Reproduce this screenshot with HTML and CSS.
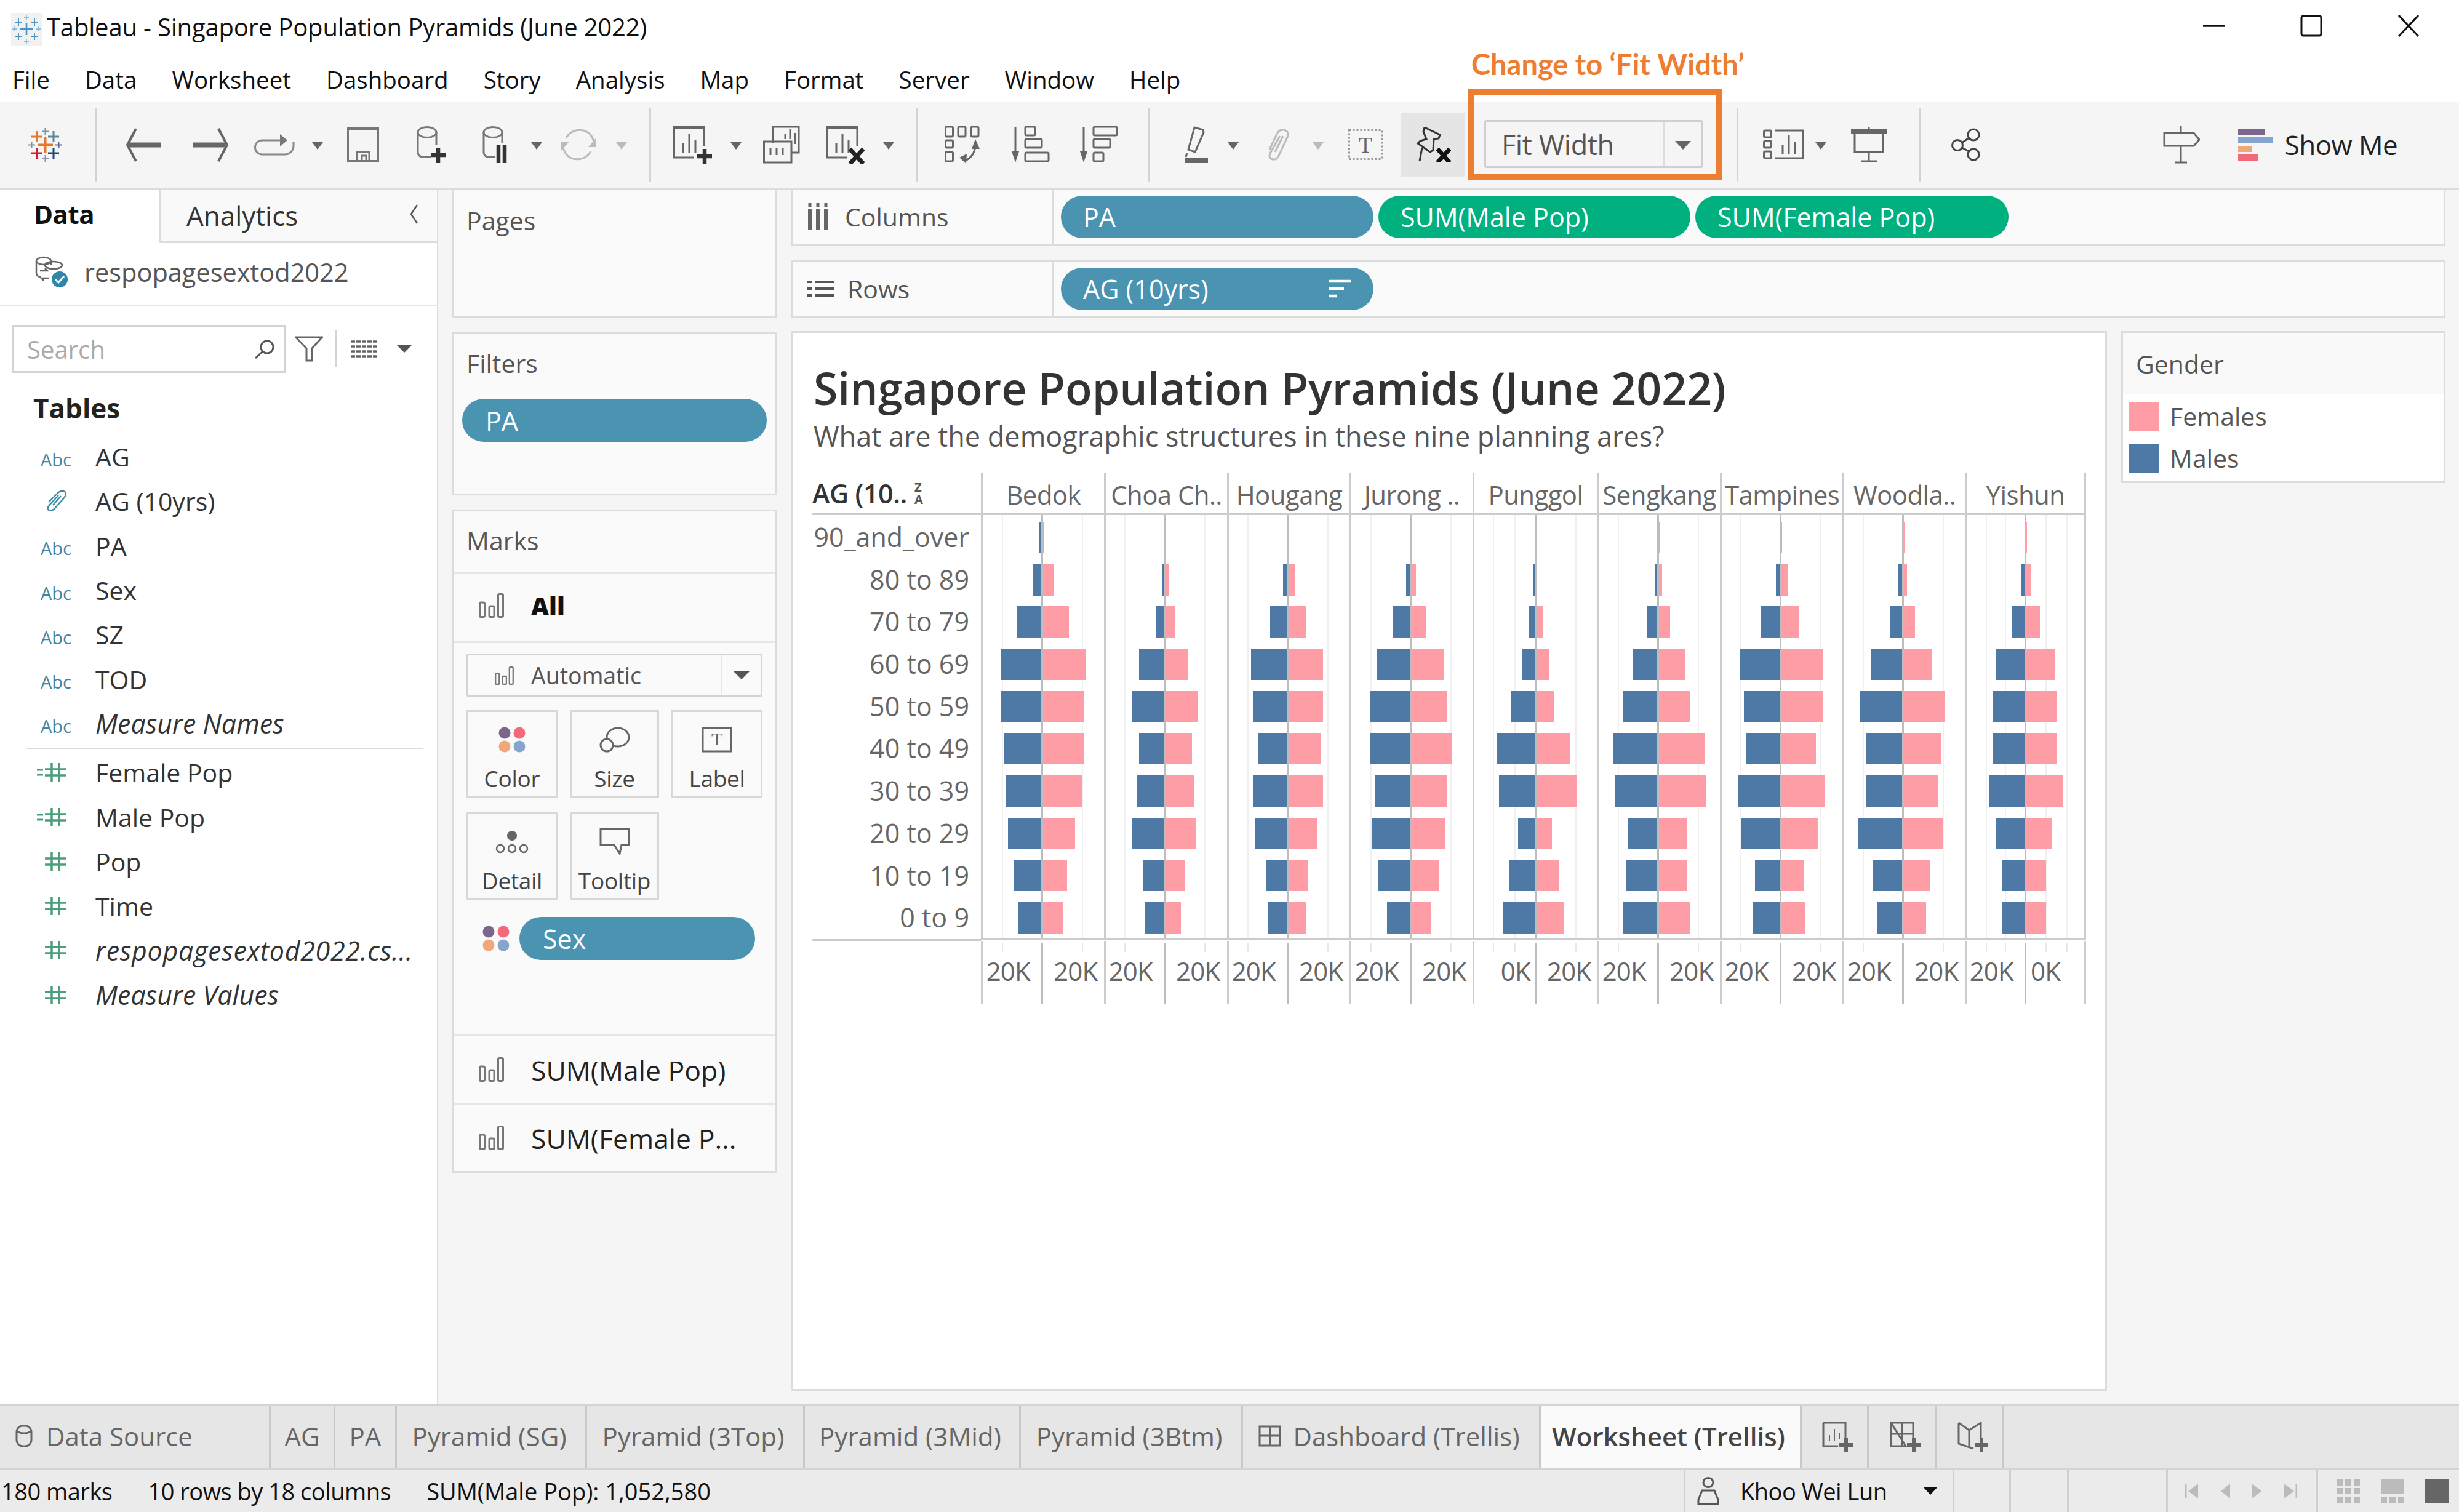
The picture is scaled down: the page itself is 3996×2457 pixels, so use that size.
FILE: index.html
```html
<!DOCTYPE html>
<html lang="en">
<head>
    <meta charset="UTF-8">
    <title>Tableau - Singapore Population Pyramids (June 2022)</title>
    <link rel="stylesheet" href="styles.css">
</head>
<body>
<svg class="defs" width="0" height="0">
    <symbol id="i-bars" viewBox="0 0 41 40">
        <g fill="none" stroke="#777" stroke-width="3"><rect x="1.5" y="15" width="8" height="23.5" rx="2"/><rect x="17" y="21" width="8" height="17.5" rx="2"/><rect x="31.5" y="1.5" width="8" height="37" rx="2"/></g>
    </symbol>
    <symbol id="i-hash" viewBox="0 0 48 32">
        <g fill="none" stroke="#4b9e7c" stroke-width="3.5"><path d="M13 11H48M13 21H48M24 1V31M36 1V31"/></g>
    </symbol>
    <symbol id="i-calc" viewBox="0 0 48 32">
        <g fill="none" stroke="#4b9e7c" stroke-width="3.5"><path d="M13 11H48M13 21H48M24 1V31M36 1V31"/><path d="M0 12H10M0 20H10" stroke-width="3"/></g>
    </symbol>
    <symbol id="i-dots" viewBox="0 0 44 42">
        <circle cx="10" cy="10" r="9.5" fill="#7b668e"/><circle cx="34" cy="10" r="9.5" fill="#f2697a"/><circle cx="10" cy="32" r="9.5" fill="#f0a77a"/><circle cx="34" cy="32" r="9.5" fill="#85a5cd"/>
    </symbol>
</svg>

<div class="app">
    <!-- Title and menu -->
    <header class="titlebar">
        <svg class="app-icon" width="50" height="53" viewBox="0 0 50 53">
            <rect width="50" height="53" fill="#f1f1f1"/>
            <g fill="none" stroke="#4a94c8">
                <path d="M25 16V36M15 26H35" stroke-width="2.6"/>
                <path d="M12 9V21M6 15H18M38 9V21M32 15H44M12 32V44M6 38H18M38 32V44M32 38H44" stroke-width="2"/>
                <path d="M25 3V11M21 7H29M25 42V50M21 46H29M5 22V30M1 26H9M45 22V30M41 26H49" stroke-width="1.4" opacity=".7"/>
            </g>
        </svg>
        <span class="title-text">Tableau - Singapore Population Pyramids (June 2022)</span>
        <div class="win-btns">
            <svg width="36" height="4"><path d="M0 2H36" stroke="#111" stroke-width="3.5"/></svg>
            <svg width="36" height="36"><rect x="2" y="2" width="32" height="32" rx="3" fill="none" stroke="#111" stroke-width="3"/></svg>
            <svg width="36" height="36"><path d="M2 1 34 35M34 1 2 35" stroke="#111" stroke-width="3" fill="none"/></svg>
        </div>
    </header>
    <nav class="menubar">
        <span>File</span><span>Data</span><span>Worksheet</span><span>Dashboard</span><span>Story</span><span>Analysis</span><span>Map</span><span>Format</span><span>Server</span><span>Window</span><span>Help</span>
    </nav>

    <!-- Toolbar -->
    <div class="toolbar">
        <svg class="logo" width="55" height="55" viewBox="0 0 55 55">
            <g fill="none">
                <path d="M27.5 15V40M15 27.5H40" stroke="#e8762b" stroke-width="4"/>
                <path d="M14 5V23M5 14H23" stroke="#e8762b" stroke-width="3"/>
                <path d="M41 5V23M32 14H50" stroke="#5b879b" stroke-width="3"/>
                <path d="M14 32V50M5 41H23" stroke="#c72037" stroke-width="3"/>
                <path d="M41 32V50M32 41H50" stroke="#1f457e" stroke-width="3"/>
                <path d="M27.5 0V11M22 5.5H33" stroke="#7099a6" stroke-width="2"/>
                <path d="M27.5 44V55M22 49.5H33" stroke="#8f8fb3" stroke-width="2"/>
                <path d="M5.5 22V33M0 27.5H11" stroke="#7099a6" stroke-width="2"/>
                <path d="M49.5 22V33M44 27.5H55" stroke="#5b6591" stroke-width="2"/>
            </g>
        </svg>
        <i class="sep g-54"></i>
        <svg class="g-46" width="58" height="55" viewBox="0 0 58 55"><path d="M17 1 3 27.5 17 54" fill="none" stroke="#666" stroke-width="4"/><path d="M6 27.5H58" stroke="#666" stroke-width="8"/></svg>
        <svg class="g-52" width="58" height="55" viewBox="0 0 58 55"><path d="M41 1 55 27.5 41 54" fill="none" stroke="#666" stroke-width="4"/><path d="M0 27.5H52" stroke="#666" stroke-width="8"/></svg>
        <svg class="g-40" width="67" height="36" viewBox="0 0 67 36"><path d="M46 11H14a11.500 11.500 0 0 0 0 23H51a14 14 0 0 0 14-14V13" fill="none" stroke="#888" stroke-width="3"/><path d="M43 1V21L55 11Z" fill="#777"/></svg>
        <i class="caret g-28"></i>
        <svg class="g-39" width="52" height="56" viewBox="0 0 52 56"><g fill="none" stroke="#777" stroke-width="3"><path d="M1.500 3.500H50.500V54.500H1.500Z"/><path d="M16 54V40H36V54M24 54V46H31V54"/></g><path d="M0 0H52V5H0Z" fill="#777"/></svg>
        <svg class="g-60" width="48" height="60" viewBox="0 0 48 60"><g fill="none" stroke="#777" stroke-width="3"><ellipse cx="18" cy="10" rx="15" ry="8.500"/><path d="M3 10V42Q3 50 12 50H24M33 10V30"/></g><path d="M24 47H48M36 35V60" stroke="#333" stroke-width="6.500"/></svg>
        <svg class="g-59" width="42" height="60" viewBox="0 0 42 60"><g fill="none" stroke="#777" stroke-width="3"><ellipse cx="18" cy="10" rx="15" ry="8.500"/><path d="M3 10V42Q3 50 12 50H22M33 10V28"/></g><path d="M27 30V60M37 30V60" stroke="#333" stroke-width="6.500"/></svg>
        <i class="caret g-38"></i>
        <svg class="g-31" width="56" height="56" viewBox="0 0 56 56"><g fill="none" stroke="#bbb" stroke-width="3"><path d="M8 17A25 25 0 0 1 47 11Q54 20 53 30"/><path d="M48 39A25 25 0 0 1 9 45Q2 36 3 26"/></g><path d="M44 32 56 18V32ZM12 24 0 38V24Z" fill="#bbb"/></svg>
        <i class="caret light g-33"></i>
        <i class="sep g-36"></i>
        <svg class="g-36" width="63" height="62" viewBox="0 0 63 62"><g fill="none" stroke="#666" stroke-width="3"><path d="M1.500 2H50V34M34 52H1.500V2"/><path d="M16 44V28M26 44V14M36 44V24" stroke-width="3"/></g><path d="M0 1H51V5H0Z" fill="#666"/><path d="M39 50H63M51 38V62" stroke="#333" stroke-width="6.500"/></svg>
        <i class="caret g-30"></i>
        <svg class="g-35" width="60" height="62" viewBox="0 0 60 62"><g fill="none" stroke="#666" stroke-width="3"><path d="M16 28V2H58V44H46"/><path d="M1.500 26H46V60H1.500Z"/><path d="M36 22V14M44 22V6M52 30V12M12 48V36M22 48V36M32 48V36"/></g></svg>
        <svg class="g-43" width="62" height="62" viewBox="0 0 62 62"><g fill="none" stroke="#666" stroke-width="3"><path d="M1.500 2H50V34M34 52H1.500V2"/><path d="M16 44V28M26 44V14M36 44V24"/></g><path d="M0 1H51V5H0Z" fill="#666"/><path d="M38 38 60 62M60 38 38 62" stroke="#222" stroke-width="7"/></svg>
        <i class="caret g-30"></i>
        <i class="sep g-35"></i>
        <svg class="g-44" width="60" height="62" viewBox="0 0 60 62"><g fill="none" stroke="#666" stroke-width="3"><rect x="1.500" y="2" width="12" height="16" rx="2"/><rect x="22" y="2" width="12" height="16" rx="2"/><rect x="43" y="2" width="12" height="16" rx="2"/><rect x="1.500" y="24" width="12" height="12" rx="2"/><rect x="1.500" y="43" width="12" height="15" rx="2"/><path d="M50 30Q50 50 32 58"/></g><path d="M50 22 44 38H57ZM24 52 36 46 35 62Z" fill="#666"/></svg>
        <svg class="g-49" width="62" height="62" viewBox="0 0 62 62"><g fill="none" stroke="#666" stroke-width="3"><path d="M6 2V44"/><rect x="22" y="2" width="16" height="14" rx="2"/><rect x="22" y="22" width="27" height="14" rx="2"/><rect x="22" y="44" width="38" height="14" rx="2"/></g><path d="M0 42H12L6 60Z" fill="#666"/></svg>
        <svg class="g-49" width="62" height="62" viewBox="0 0 62 62"><g fill="none" stroke="#666" stroke-width="3"><path d="M6 2V44"/><rect x="22" y="2" width="38" height="14" rx="2"/><rect x="22" y="22" width="27" height="14" rx="2"/><rect x="22" y="44" width="16" height="14" rx="2"/></g><path d="M0 42H12L6 60Z" fill="#666"/></svg>
        <i class="sep g-49"></i>
        <svg class="g-57" width="37" height="60" viewBox="0 0 37 60"><g fill="none" stroke="#666" stroke-width="3"><path d="M15 2 29 6 30 10 16 42 5 38Z"/><path d="M3 44 1 50"/></g><path d="M0 51H37V60H0Z" fill="#666"/></svg>
        <i class="caret g-32"></i>
        <svg class="g-43" width="40" height="52" viewBox="0 0 40 52"><path d="M24 12 8 40Q5 48 12 50 19 51 22 44L36 14Q40 4 30 2 22 1 19 9L7 34M29 12 16 38" fill="none" stroke="#bbb" stroke-width="3"/></svg>
        <i class="caret light g-37"></i>
        <svg class="g-40" width="56" height="50" viewBox="0 0 56 50"><rect x="1.500" y="1.500" width="53" height="47" fill="none" stroke="#999" stroke-width="3" stroke-dasharray="3 3"/><text class="t-glyph" x="28" y="38">T</text></svg>
        <div class="pin-btn">
            <svg width="58" height="58" viewBox="0 0 58 58"><g fill="none" stroke="#333" stroke-width="3"><path d="M15 1 40 13 38 19 30 20 29 38 24 41 4 27 8 23 18 20 13 8Z"/><path d="M11 34 7 56"/></g><path d="M36 36 56 58M56 36 36 58" stroke="#111" stroke-width="7"/></svg>
        </div>
        <div class="fit-combo"><span>Fit Width</span><b><i class="caret"></i></b></div>
        <i class="sep g-54"></i>
        <svg class="g-40" width="67" height="50" viewBox="0 0 67 50"><g fill="none" stroke="#666" stroke-width="3"><rect x="1.500" y="2" width="12" height="11" rx="2"/><rect x="1.500" y="19" width="12" height="11" rx="2"/><rect x="1.500" y="36" width="12" height="11" rx="2"/><path d="M20 2H65V47H20M32 40V26M42 40V10M52 40V20"/></g></svg>
        <i class="caret g-18"></i>
        <svg class="g-40" width="58" height="58" viewBox="0 0 58 58"><g fill="none" stroke="#666" stroke-width="3"><path d="M6 9V41H52V9M29 41V56M16 56H42M29 0V5"/></g><path d="M0 4H58V11H0Z" fill="#666"/></svg>
        <i class="sep g-52"></i>
        <svg class="g-50" width="48" height="54" viewBox="0 0 48 54"><g fill="none" stroke="#444" stroke-width="3"><circle cx="36" cy="11" r="9"/><circle cx="10" cy="28" r="8.500"/><circle cx="36" cy="43" r="9"/><path d="M29 16 17 24M17 32 29 38"/></g></svg>
        <svg class="g-auto" width="60" height="62" viewBox="0 0 60 62"><g fill="none" stroke="#666" stroke-width="3"><path d="M2 12H50L59 23 50 33H2ZM29 0V12M29 33V60M19 60H39"/></g></svg>
        <div class="show-me">
            <div class="sm-icon"><i class="s1"></i><i class="s2"></i><i class="s3"></i><i class="s4"></i></div>
            <span>Show Me</span>
        </div>
    </div>

    <!-- Main work area -->
    <main class="workspace">
        <aside class="data-pane">
            <div class="data-tabs">
                <div class="dtab active">Data</div>
                <div class="dtab">Analytics
                    <svg class="collapse" width="14" height="32" viewBox="0 0 14 32"><path d="M12 1 2 16 12 31" fill="none" stroke="#555" stroke-width="2.500"/></svg>
                </div>
            </div>
            <div class="ds-row">
                <svg width="56" height="52" viewBox="0 0 56 52">
                    <g fill="none" stroke="#666" stroke-width="2.500"><ellipse cx="16" cy="8" rx="12" ry="6"/><path d="M4 8V28Q4 34 12 34M28 8V14"/><ellipse cx="32" cy="15" rx="14" ry="6"/><path d="M10 24H22L18 20M24 36H12L16 40"/></g>
                    <circle cx="42" cy="38" r="13" fill="#2f86a8"/><path d="M35 38 40 43 49 33" fill="none" stroke="#fff" stroke-width="3"/>
                </svg>
                <span>respopagesextod2022</span>
            </div>
            <div class="search-row">
                <div class="search">
                    <span>Search</span>
                    <svg width="34" height="34" viewBox="0 0 34 34"><circle cx="20" cy="14" r="10" fill="none" stroke="#555" stroke-width="3"/><path d="M13 21 1 32" stroke="#555" stroke-width="3"/></svg>
                </div>
                <svg class="flt" width="46" height="42" viewBox="0 0 46 42"><path d="M1.500 2H44.500L28 20V40H19V20Z" fill="none" stroke="#666" stroke-width="3"/></svg>
                <i class="vsep"></i>
                <svg class="lst" width="44" height="30" viewBox="0 0 44 30"><path d="M0 3H44M0 11H44M0 19H44M0 27H44" stroke="#666" stroke-width="3.500" stroke-dasharray="7 2"/></svg>
                <svg class="dd" width="26" height="14" viewBox="0 0 26 14"><path d="M0 0H26L13 13Z" fill="#555"/></svg>
            </div>
            <div class="tables-head">Tables</div>
            <ul class="fields">
                <li><span class="ficon abc">Abc</span>AG</li>
                <li><span class="ficon"><svg width="36" height="34" viewBox="0 0 36 34"><path d="M22 8 7 24Q2 31 7 32 12 34 17 28L32 11Q37 3 30 1 24 0 19 6L6 19M26 9 13 24" fill="none" stroke="#3f8aa8" stroke-width="2.400"/></svg></span>AG (10yrs)</li>
                <li><span class="ficon abc">Abc</span>PA</li>
                <li><span class="ficon abc">Abc</span>Sex</li>
                <li><span class="ficon abc">Abc</span>SZ</li>
                <li><span class="ficon abc">Abc</span>TOD</li>
                <li><span class="ficon abc">Abc</span><em>Measure Names</em></li>
            </ul>
            <hr class="fields-sep">
            <ul class="fields">
                <li><span class="ficon"><svg class="hash" width="62" height="32" viewBox="0 0 62 32"><use href="#i-calc" width="48" height="32"/></svg></span>Female Pop</li>
                <li><span class="ficon"><svg class="hash" width="62" height="32" viewBox="0 0 62 32"><use href="#i-calc" width="48" height="32"/></svg></span>Male Pop</li>
                <li><span class="ficon"><svg class="hash" width="62" height="32" viewBox="0 0 62 32"><use href="#i-hash" width="48" height="32"/></svg></span>Pop</li>
                <li><span class="ficon"><svg class="hash" width="62" height="32" viewBox="0 0 62 32"><use href="#i-hash" width="48" height="32"/></svg></span>Time</li>
                <li><span class="ficon"><svg class="hash" width="62" height="32" viewBox="0 0 62 32"><use href="#i-hash" width="48" height="32"/></svg></span><em class="wide-em">respopagesextod2022.cs...</em></li>
                <li><span class="ficon"><svg class="hash" width="62" height="32" viewBox="0 0 62 32"><use href="#i-hash" width="48" height="32"/></svg></span><em>Measure Values</em></li>
            </ul>
        </aside>

        <section class="cards-col">
            <div class="card pages"><div class="card-title">Pages</div></div>
            <div class="card filters">
                <div class="card-title">Filters</div>
                <div class="pill blue wide">PA</div>
            </div>
            <div class="card marks">
                <div class="card-title marks-title">Marks</div>
                <div class="marks-row all"><svg width="41" height="40"><use href="#i-bars"/></svg><b>All</b></div>
                <div class="mark-body">
                    <div class="mark-type">
                        <svg width="31" height="30"><use href="#i-bars"/></svg>
                        <span>Automatic</span>
                        <b><svg width="26" height="14" viewBox="0 0 26 14"><path d="M0 0H26L13 13Z" fill="#555"/></svg></b>
                    </div>
                    <div class="mark-cards">
                        <div class="mcard"><svg width="44" height="42"><use href="#i-dots"/></svg><span>Color</span></div>
                        <div class="mcard"><svg width="50" height="42" viewBox="0 0 50 42"><g fill="none" stroke="#666" stroke-width="3"><ellipse cx="30" cy="17" rx="18" ry="15"/><circle cx="12" cy="30" r="10" fill="#fafafa"/></g></svg><span>Size</span></div>
                        <div class="mcard"><svg width="50" height="42" viewBox="0 0 50 42"><rect x="2" y="2" width="46" height="38" fill="none" stroke="#666" stroke-width="3"/><text class="t-glyph t-small" x="25" y="30">T</text></svg><span>Label</span></div>
                        <div class="mcard"><svg width="54" height="40" viewBox="0 0 54 40"><g fill="none" stroke="#666" stroke-width="2.500"><circle cx="8" cy="30" r="6"/><circle cx="27" cy="30" r="6"/><circle cx="46" cy="30" r="6"/></g><circle cx="27" cy="9" r="8" fill="#666"/></svg><span>Detail</span></div>
                        <div class="mcard"><svg width="50" height="44" viewBox="0 0 50 44"><path d="M2 2H48V28H36L33 42 24 28H2Z" fill="none" stroke="#666" stroke-width="3"/></svg><span>Tooltip</span></div>
                    </div>
                    <div class="sex-row">
                        <svg width="44" height="42"><use href="#i-dots"/></svg>
                        <div class="pill blue sex">Sex</div>
                    </div>
                </div>
                <div class="marks-row"><svg width="41" height="40"><use href="#i-bars"/></svg><span>SUM(Male Pop)</span></div>
                <div class="marks-row"><svg width="41" height="40"><use href="#i-bars"/></svg><span>SUM(Female P...</span></div>
            </div>
        </section>

        <section class="view-col">
            <div class="shelf">
                <div class="shelf-label">
                    <svg width="36" height="44" viewBox="0 0 36 44"><path d="M5 10V43M18 10V43M31 10V43" stroke="#666" stroke-width="6"/><path d="M5 0V6M18 0V6M31 0V6" stroke="#666" stroke-width="5"/></svg>
                    <span>Columns</span>
                </div>
                <div class="pill blue shelf-pill">PA</div>
                <div class="pill green shelf-pill">SUM(Male Pop)</div>
                <div class="pill green shelf-pill">SUM(Female Pop)</div>
            </div>
            <div class="shelf rows">
                <div class="shelf-label">
                    <svg width="44" height="30" viewBox="0 0 44 30"><path d="M0 4H8M13 4H44M0 15H8M13 15H44M0 26H8M13 26H44" stroke="#555" stroke-width="4"/></svg>
                    <span>Rows</span>
                </div>
                <div class="pill blue shelf-pill with-sort">AG (10yrs)
                    <svg width="36" height="30" viewBox="0 0 36 30"><path d="M0 3H36M0 15H24M0 27H12" stroke="#fff" stroke-width="4.500"/></svg>
                </div>
            </div>
            <div class="view-row">
                <div class="viz">
                    <h1 class="viz-title">Singapore Population Pyramids (June 2022)</h1>
                    <p class="viz-sub">What are the demographic structures in these nine planning ares?</p>
                    <div class="chart" id="chart"></div>
                </div>
                <div class="legend">
                    <div class="legend-title">Gender</div>
                    <div class="legend-item"><i class="swatch female"></i>Females</div>
                    <div class="legend-item"><i class="swatch male"></i>Males</div>
                </div>
            </div>
        </section>
    </main>

    <!-- Sheet tabs -->
    <div class="tabs">
        <div class="tab"><svg width="28" height="37" viewBox="0 0 28 37"><g fill="none" stroke="#666" stroke-width="3"><rect x="2" y="2" width="24" height="33" rx="10"/><path d="M2 11Q14 17 26 11"/></g></svg>Data Source</div>
        <div class="tab short">AG</div>
        <div class="tab short">PA</div>
        <div class="tab">Pyramid (SG)</div>
        <div class="tab">Pyramid (3Top)</div>
        <div class="tab">Pyramid (3Mid)</div>
        <div class="tab">Pyramid (3Btm)</div>
        <div class="tab"><svg width="37" height="37" viewBox="0 0 37 37"><path d="M2 3H35V34H2ZM18.500 3V34M2 18H35" fill="none" stroke="#666" stroke-width="3"/></svg>Dashboard (Trellis)</div>
        <div class="tab active">Worksheet (Trellis)</div>
        <div class="tab add"><svg width="50" height="50" viewBox="0 0 50 50"><g fill="none" stroke="#666" stroke-width="3"><path d="M2 2H38V28M26 40H2V2"/><path d="M12 32V22M20 32V12M28 28V18" stroke-width="2"/></g><path d="M28 38H50M39 27V50" stroke="#666" stroke-width="6"/></svg></div>
        <div class="tab add"><svg width="50" height="50" viewBox="0 0 50 50"><path d="M2 2H38V28M26 40H2V2ZM2 20H38M20 2V40" fill="none" stroke="#666" stroke-width="3"/><path d="M28 38H50M39 27V50" stroke="#666" stroke-width="6"/></svg></div>
        <div class="tab add"><svg width="50" height="50" viewBox="0 0 50 50"><path d="M2 2 19 14 38 2V28M26 44 2 36V2M19 14V42" fill="none" stroke="#666" stroke-width="3"/><path d="M28 38H50M39 27V50" stroke="#666" stroke-width="6"/></svg></div>
    </div>

    <!-- Status bar -->
    <footer class="status">
        <div class="status-text"><span>180 marks</span><span>10 rows by 18 columns</span><span>SUM(Male Pop): 1,052,580</span></div>
        <div class="st-cell user">
            <svg width="36" height="46" viewBox="0 0 36 46"><g fill="none" stroke="#555" stroke-width="3"><ellipse cx="18" cy="9" rx="8" ry="7.500"/><path d="M8 22H28L34 37V44H2V37Z"/></g></svg>
            <span>Khoo Wei Lun</span>
            <svg class="user-dd" width="24" height="13" viewBox="0 0 24 13"><path d="M0 0H24L12 13Z" fill="#111"/></svg>
        </div>
        <div class="st-cell c92"></div>
        <div class="st-cell c94"></div>
        <div class="st-cell c161"></div>
        <div class="st-cell nav">
            <svg width="22" height="24" viewBox="0 0 22 24"><path d="M1 0V24" stroke="#bbb" stroke-width="3"/><path d="M21 0V24L5 12Z" fill="#bbb"/></svg>
            <svg width="15" height="24" viewBox="0 0 15 24"><path d="M15 0V24L0 12Z" fill="#bbb"/></svg>
            <svg width="15" height="24" viewBox="0 0 15 24"><path d="M0 0V24L15 12Z" fill="#bbb"/></svg>
            <svg width="22" height="24" viewBox="0 0 22 24"><path d="M21 0V24" stroke="#bbb" stroke-width="3"/><path d="M1 0V24L17 12Z" fill="#bbb"/></svg>
        </div>
        <div class="st-cell views">
            <svg width="38" height="38" viewBox="0 0 38 38"><path d="M0 0H10V10H0ZM14 0H24V10H14ZM28 0H38V10H28ZM0 14H10V24H0ZM14 14H24V24H14ZM28 14H38V24H28ZM0 28H10V38H0ZM14 28H24V38H14ZM28 28H38V38H28Z" fill="#bbb"/></svg>
            <svg width="38" height="38" viewBox="0 0 38 38"><path d="M0 0H38V24H0ZM0 28H10V38H0ZM14 28H24V38H14ZM28 28H38V38H28Z" fill="#bbb"/></svg>
            <svg width="38" height="38" viewBox="0 0 38 38"><path d="M0 0H38V38H0Z" fill="#666"/></svg>
        </div>
    </footer>

    <!-- Annotation drawn over the screenshot -->
    <div class="note-text">Change to ‘Fit Width’</div>
    <div class="note-box"></div>
</div>
<script src="chart.js"></script>
</body>
</html>
```

FILE: styles.css
```css
/* Basic page styling */
body {
    margin: 0;
    font-family: "Open Sans", "Noto Sans", sans-serif;
    font-size: 41px;
    color: #333;
    background: #fff;
}

.defs {
    position: absolute;
}

.app {
    position: relative;
    width: 3996px;
    height: 2457px;
    display: flex;
    flex-direction: column;
    overflow: hidden;
}

/* Title and menu */
.titlebar {
    height: 97px;
    padding: 0 0 10px 18px;
    box-sizing: border-box;
    display: flex;
    align-items: center;
}

.app-icon {
    margin-top: 7px;
}

.title-text {
    margin-left: 8px;
    font-size: 40px;
    letter-spacing: -0.18px;
    color: #111;
}

.win-btns {
    margin-left: auto;
    display: flex;
    align-items: center;
    gap: 122px;
    padding: 0 64px 4px 0;
}

.menubar {
    height: 68px;
    padding: 0 0 4px 20px;
    box-sizing: border-box;
    display: flex;
    align-items: center;
    gap: 57px;
    font-size: 38.5px;
    color: #111;
}

/* Toolbar */
.toolbar {
    height: 140px;
    padding-left: 46px;
    display: flex;
    align-items: center;
    background: #f5f5f5;
    box-sizing: border-box;
}

.toolbar svg,
.toolbar .caret,
.toolbar .sep {
    flex: none;
}

.sep {
    width: 3px;
    height: 120px;
    background: #d4d4d4;
}

.caret {
    width: 0;
    height: 0;
    border-left: 9px solid transparent;
    border-right: 9px solid transparent;
    border-top: 12px solid #666;
    margin-top: 4px;
}

.caret.light {
    border-top-color: #bbb;
}

/* gaps between toolbar items */
.g-18 { margin-left: 18px; }
.g-28 { margin-left: 28px; }
.g-30 { margin-left: 30px; }
.g-31 { margin-left: 31px; }
.g-32 { margin-left: 32px; }
.g-33 { margin-left: 33px; }
.g-35 { margin-left: 35px; }
.g-36 { margin-left: 36px; }
.g-37 { margin-left: 37px; }
.g-38 { margin-left: 38px; }
.g-39 { margin-left: 39px; }
.g-40 { margin-left: 40px; }
.g-43 { margin-left: 43px; }
.g-44 { margin-left: 44px; }
.g-46 { margin-left: 46px; }
.g-49 { margin-left: 49px; }
.g-50 { margin-left: 50px; }
.g-52 { margin-left: 52px; }
.g-54 { margin-left: 54px; }
.g-57 { margin-left: 57px; }
.g-59 { margin-left: 59px; }
.g-60 { margin-left: 60px; }
.g-auto { margin-left: auto; }

.t-glyph {
    font-family: "Liberation Serif", serif;
    font-size: 36px;
    fill: #666;
    text-anchor: middle;
}

.t-small {
    font-size: 30px;
}

.pin-btn {
    width: 103px;
    height: 103px;
    margin-left: 30px;
    display: flex;
    align-items: center;
    justify-content: center;
    background: #e5e5e5;
    flex: none;
}

.fit-combo {
    width: 356px;
    height: 78px;
    margin: 0 0 2px 32px;
    display: flex;
    align-items: center;
    box-sizing: border-box;
    border: 3px solid #d0d0d0;
    border-radius: 4px;
    font-size: 45px;
    color: #555;
    flex: none;
}

.fit-combo span {
    flex: 1;
    padding-left: 25px;
    letter-spacing: -0.4px;
}

.fit-combo b {
    width: 60px;
    height: 100%;
    display: flex;
    align-items: center;
    justify-content: center;
    border-left: 2px solid #ddd;
}

.fit-combo .caret {
    border-left-width: 13px;
    border-right-width: 13px;
    border-top-width: 14px;
}

.show-me {
    margin: 0 100px 0 62px;
    display: flex;
    align-items: center;
    gap: 20px;
    font-size: 44px;
    letter-spacing: -0.6px;
    color: #222;
}

.sm-icon {
    width: 56px;
    display: flex;
    flex-direction: column;
    gap: 4px;
}

.sm-icon i { display: block; height: 10px; }
.sm-icon .s1 { width: 43px; background: #7b668e; }
.sm-icon .s2 { width: 56px; background: #85a5cd; }
.sm-icon .s3 { width: 23px; background: #f0a77a; }
.sm-icon .s4 { width: 33px; background: #f2697a; }

/* Main work area */
.workspace {
    height: 1977px;
    flex: none;
    box-sizing: border-box;
    display: grid;
    grid-template-columns: 712px 529px 1fr;
    column-gap: 22px;
    padding-right: 22px;
    background: #f5f5f5;
    border-top: 3px solid #dcdcdc;
}

/* Data pane */
.data-pane {
    background: #fff;
    border-right: 2px solid #dcdcdc;
    min-width: 0;
}

.data-tabs {
    height: 87px;
    display: flex;
}

.dtab {
    position: relative;
    display: flex;
    align-items: center;
}

.dtab.active {
    width: 258px;
    padding: 0 0 8px 55px;
    box-sizing: border-box;
    font-weight: 700;
    font-size: 42px;
    letter-spacing: -0.5px;
    color: #111;
}

.dtab:not(.active) {
    flex: 1;
    padding-left: 42px;
    font-size: 44px;
    background: #f9f9f9;
    border-left: 3px solid #dcdcdc;
    border-bottom: 3px solid #dcdcdc;
}

.collapse {
    position: absolute;
    right: 30px;
    top: 24px;
}

.ds-row {
    height: 102px;
    padding: 0 0 6px 55px;
    display: flex;
    align-items: center;
    gap: 26px;
    border-bottom: 2px solid #e6e6e6;
    box-sizing: border-box;
    font-size: 41.5px;
    color: #555;
}

.search-row {
    height: 128px;
    padding: 12px 0 0 19px;
    display: flex;
    align-items: center;
    box-sizing: border-box;
}

.search {
    width: 446px;
    height: 78px;
    box-sizing: border-box;
    border: 3px solid #d4d4d4;
    padding: 0 14px 0 22px;
    display: flex;
    align-items: center;
    justify-content: space-between;
    font-size: 40px;
    color: #aaa;
}

.flt { margin-left: 14px; }

.vsep {
    width: 3px;
    height: 60px;
    margin-left: 20px;
    background: #d4d4d4;
}

.lst { margin-left: 22px; }
.dd { margin-left: 30px; }

.tables-head {
    height: 81px;
    padding: 0 0 6px 54px;
    box-sizing: border-box;
    display: flex;
    align-items: center;
    font-size: 44px;
    font-weight: 700;
    color: #222;
}

.fields {
    list-style: none;
    margin: 0;
    padding: 0;
}

.fields li {
    height: 72.3px;
    padding-left: 27px;
    display: flex;
    align-items: center;
    white-space: nowrap;
    color: #333;
}

.fields em {
    font-size: 43px;
}

.fields .wide-em {
    letter-spacing: 0.7px;
}

.ficon {
    width: 128px;
    flex: none;
    display: flex;
    justify-content: center;
}

.abc {
    font-size: 29px;
    padding-top: 8px;
    color: #3f86a3;
}

.hash {
    display: block;
}

.fields-sep {
    margin: 3px 22px 2px 43px;
    border: 0;
    border-top: 2px solid #dcdcdc;
}

/* Pages, Filters, Marks */
.cards-col {
    display: flex;
    flex-direction: column;
    min-width: 0;
}

.card {
    box-sizing: border-box;
    background: #fafafa;
    border: 3px solid #dcdcdc;
}

.card-title {
    font-size: 41px;
    color: #555;
    padding-left: 21px;
    height: 100px;
    display: flex;
    align-items: center;
}

.pages {
    height: 209px;
    border-top: 0;
}

.filters {
    height: 266px;
    margin-top: 22px;
}

.filters .card-title {
    height: 96px;
}

.pill {
    height: 69px;
    display: flex;
    align-items: center;
    box-sizing: border-box;
    border-radius: 35px;
    font-size: 43px;
    color: #fff;
    flex: none;
}

.pill.blue { background: #4a94b2; }
.pill.green { background: #00b17f; }

.pill.wide {
    margin: 10px 14px 0;
    padding-left: 38px;
    height: 70px;
}

.marks {
    flex: 1;
    margin: 23px 0 376px;
    display: flex;
    flex-direction: column;
}

.marks-title {
    height: 101px;
    padding-bottom: 4px;
    box-sizing: border-box;
    border-bottom: 3px solid #e6e6e6;
    flex: none;
}

.marks-row {
    height: 108px;
    flex: none;
    padding-left: 41px;
    display: flex;
    align-items: center;
    gap: 44px;
    color: #222;
    font-size: 44.5px;
}

.marks-row + .marks-row {
    border-top: 3px solid #e6e6e6;
}

.marks-row.all {
    height: 110px;
    padding-bottom: 6px;
    box-sizing: border-box;
    font-size: 40px;
    font-weight: 700;
    color: #111;
}

.mark-body {
    flex: 1;
    padding: 17px 21px 0;
    border-top: 3px solid #e6e6e6;
    border-bottom: 3px solid #e6e6e6;
}

.mark-type {
    height: 71px;
    display: flex;
    align-items: center;
    box-sizing: border-box;
    border: 3px solid #d4d4d4;
    border-radius: 4px;
    padding-left: 43px;
    gap: 28px;
    font-size: 37.5px;
    color: #555;
}

.mark-type span {
    flex: 1;
}

.mark-type b {
    width: 62px;
    height: 100%;
    display: flex;
    align-items: center;
    justify-content: center;
    border-left: 2px solid #e6e6e6;
}

.mark-cards {
    margin-top: 21px;
    display: grid;
    grid-template-columns: 148px 145px 148px;
    grid-auto-rows: 143px;
    column-gap: 20px;
    row-gap: 23px;
}

.mcard {
    display: flex;
    flex-direction: column;
    align-items: center;
    justify-content: flex-end;
    gap: 16px;
    padding-bottom: 4px;
    box-sizing: border-box;
    border: 3px solid #d8d8d8;
    font-size: 37px;
    color: #444;
    letter-spacing: -0.3px;
}

.sex-row {
    margin-top: 27px;
    padding-left: 26px;
    display: flex;
    align-items: center;
    gap: 16px;
}

.pill.sex {
    width: 383px;
    padding-left: 38px;
    height: 70px;
}

/* Columns and Rows shelves */
.view-col {
    display: flex;
    flex-direction: column;
    min-width: 0;
}

.shelf {
    height: 91px;
    margin-bottom: 23px;
    display: flex;
    align-items: center;
    gap: 8px;
    flex: none;
    box-sizing: border-box;
    background: #fafafa;
    border: 3px solid #dcdcdc;
    border-top: 0;
}

.shelf.rows {
    height: 94px;
    margin-bottom: 22px;
    border-top: 3px solid #dcdcdc;
}

.shelf-label {
    width: 425px;
    height: 100%;
    margin-right: 3px;
    padding-left: 23px;
    box-sizing: border-box;
    display: flex;
    align-items: center;
    gap: 26px;
    border-right: 3px solid #dcdcdc;
    font-size: 41px;
    color: #555;
}

.rows .shelf-label {
    gap: 22px;
}

.shelf-pill {
    padding: 0 36px;
}

.shelf-pill:nth-child(2) {
    width: 508px;
}

.shelf-pill:nth-child(3) {
    width: 507px;
}

.shelf-pill:nth-child(4) {
    width: 509px;
}

.with-sort {
    justify-content: space-between;
}

/* Viz and legend */
.view-row {
    flex: 1;
    display: flex;
    align-items: flex-start;
    gap: 23px;
}

.viz {
    width: 2139px;
    height: 1722px;
    padding: 45px 0 0 34px;
    box-sizing: border-box;
    background: #fff;
    border: 3px solid #dcdcdc;
}

.viz-title {
    margin: 0;
    height: 88px;
    line-height: 88px;
    font-size: 71.6px;
    font-weight: 600;
    color: #333;
}

.viz-sub {
    margin: 10px 0 35px;
    height: 50px;
    line-height: 50px;
    font-size: 45px;
    color: #555;
}

.legend {
    flex: 1;
    height: 247px;
    box-sizing: border-box;
    background: #fff;
    border: 3px solid #dcdcdc;
}

.legend-title {
    height: 99px;
    margin-bottom: 2px;
    padding-left: 21px;
    display: flex;
    align-items: center;
    background: #f9f9f9;
    font-size: 41px;
    color: #555;
}

.legend-item {
    height: 68px;
    padding-left: 10px;
    display: flex;
    align-items: center;
    gap: 18px;
    font-size: 41px;
    color: #555;
}

.swatch {
    width: 48px;
    height: 47px;
}

.swatch.female { background: #ff9da7; }
.swatch.male { background: #4e79a7; }

/* Pyramid chart */
.chart {
    margin-left: -2px;
    font-size: 43px;
    color: #666;
}

.chart-row {
    display: flex;
}

.corner {
    width: 274px;
    flex: none;
    display: flex;
    align-items: center;
    gap: 12px;
    box-sizing: border-box;
    border-bottom: 3px solid #ccc;
    font-weight: 600;
    color: #333;
    letter-spacing: -0.4px;
}

.sort-za {
    display: flex;
    flex-direction: column;
    font-size: 20px;
    line-height: 20px;
    font-weight: 700;
    color: #555;
}

.head-cell {
    height: 68px;
    box-sizing: border-box;
    overflow: hidden;
    white-space: nowrap;
    text-align: center;
    font-size: 42px;
    line-height: 70px;
    border-left: 3px solid #ccc;
    border-bottom: 3px solid #ccc;
    letter-spacing: -0.6px;
}

.last-cell {
    border-right: 3px solid #ccc;
}

.age-labels {
    width: 274px;
    flex: none;
    padding-top: 2px;
    box-sizing: border-box;
    border-bottom: 3px solid #ccc;
}

.age-label {
    height: 68.7px;
    padding-right: 19px;
    text-align: right;
    line-height: 68.7px;
}

.pane {
    position: relative;
    height: 691px;
    padding-top: 2px;
    box-sizing: border-box;
    border-left: 3px solid #ccc;
    border-bottom: 3px solid #ccc;
}

.bar-row {
    position: relative;
    height: 68.7px;
    display: flex;
    align-items: center;
}

.side-l {
    display: flex;
    justify-content: flex-end;
    flex: none;
}

.bar {
    height: 51px;
}

.bar.male { background: #4e79a7; }
.bar.female { background: #ff9da7; }

/* gridlines and zero lines lie over the pane */
.zero {
    position: absolute;
    top: 0;
    bottom: 0;
    width: 3px;
    background: #bdbdbd;
}

.grid-line {
    position: absolute;
    top: 0;
    bottom: 0;
    width: 2px;
    background: #f0f0f0;
}

.axis-left {
    width: 274px;
    flex: none;
}

.axis-cell {
    position: relative;
    height: 103px;
    padding-bottom: 6px;
    box-sizing: border-box;
    display: flex;
    align-items: center;
    border-left: 3px solid #ccc;
    font-size: 42px;
    letter-spacing: -0.8px;
}

.axis-cell .zero {
    top: 4px;
}

.ax-l {
    flex: none;
    box-sizing: border-box;
    text-align: right;
}

.ax-r {
    flex: 1;
    white-space: nowrap;
}

.tick {
    position: absolute;
    top: 4px;
    width: 2px;
    height: 14px;
    background: #e8e8e8;
}

/* Sheet tabs */
.tabs {
    height: 100px;
    flex: none;
    display: grid;
    grid-template-columns: 440px 105px 100px 309px 354px 351px 361px 484px 424px 109px 110px 110px;
    background: #e6e6e6;
    border-top: 3px solid #d4d4d4;
    border-bottom: 3px solid #d4d4d4;
    box-sizing: content-box;
}

.tab {
    display: flex;
    align-items: center;
    gap: 19px;
    justify-content: center;
    padding: 0 6px 3px 0;
    box-sizing: border-box;
    border-right: 3px solid #c9c9c9;
    font-size: 42px;
    color: #666;
    white-space: nowrap;
}

.tab.short {
    padding-right: 0;
}

.tab.add {
    padding: 0 0 0 10px;
}

.tab:first-child {
    justify-content: flex-start;
    padding-left: 25px;
    gap: 22px;
}

.tab.active {
    background: #fafafa;
    font-weight: 600;
    color: #444;
    border-left: 3px solid #c9c9c9;
    margin-left: -3px;
}

/* Status bar */
.status {
    height: 69px;
    flex: none;
    display: flex;
    background: #ebebeb;
    font-size: 38px;
    color: #111;
}

.status-text {
    width: 2736px;
    flex: none;
    padding-left: 2px;
    box-sizing: border-box;
    display: flex;
    align-items: center;
    gap: 58px;
    letter-spacing: -0.5px;
    white-space: nowrap;
}

.status-text span:last-child {
    letter-spacing: 0;
}

.st-cell {
    display: flex;
    align-items: center;
    box-sizing: border-box;
    border-left: 3px solid #cfcfcf;
    flex: none;
}

.st-cell svg {
    flex: none;
}

.user {
    width: 437px;
    padding-left: 19px;
    gap: 34px;
    letter-spacing: -0.5px;
    white-space: nowrap;
}

.user-dd { margin-left: 24px; }

.c92 { width: 92px; }
.c94 { width: 94px; }
.c161 { width: 161px; }

.nav {
    width: 244px;
    padding-left: 28px;
    gap: 36px;
}

.views {
    width: 232px;
    padding-left: 30px;
    gap: 34px;
}

/* Orange annotation */
.note-box {
    position: absolute;
    left: 2386px;
    top: 144px;
    width: 412px;
    height: 148px;
    box-sizing: border-box;
    border: 10px solid #ed7d31;
}

.note-text {
    position: absolute;
    left: 2391px;
    top: 76px;
    font-family: Lato, sans-serif;
    font-size: 47px;
    font-weight: 700;
    color: #ed7d31;
    white-space: nowrap;
}
```

FILE: chart.js
```js
// Bar widths in pixels, oldest age group first
const ageGroups = ["90_and_over", "80 to 89", "70 to 79", "60 to 69", "50 to 59", "40 to 49", "30 to 39", "20 to 29", "10 to 19", "0 to 9"];

const panes = [
    { name: "Bedok", width: 200, zero: 99, grid: [-65, 65], axis: ["20K", "20K"],
      male: [4, 14, 41, 66, 66, 62, 59, 55, 45, 38], female: [3, 20, 44, 71, 68, 68, 65, 54, 41, 34] },
    { name: "Choa Ch..", width: 200, zero: 98, grid: [-65, 65], axis: ["20K", "20K"],
      male: [1, 4, 14, 41, 52, 41, 45, 52, 34, 31], female: [3, 7, 17, 38, 55, 45, 48, 52, 34, 27] },
    { name: "Hougang", width: 199, zero: 98, grid: [-65, 65], axis: ["20K", "20K"],
      male: [1, 7, 28, 59, 55, 48, 55, 52, 35, 31], female: [3, 13, 31, 58, 58, 54, 58, 48, 34, 31] },
    { name: "Jurong ..", width: 200, zero: 99, grid: [-65, 65], axis: ["20K", "20K"],
      male: [1, 7, 28, 55, 65, 65, 58, 62, 52, 38], female: [2, 9, 26, 54, 60, 68, 60, 57, 47, 33] },
    { name: "Punggol", width: 202, zero: 102, grid: [-69, -34, 65], axis: ["0K", "20K"],
      male: [1, 4, 11, 22, 39, 63, 59, 28, 42, 52], female: [3, 3, 13, 23, 31, 57, 68, 27, 38, 47] },
    { name: "Sengkang", width: 200, zero: 99, grid: [-65, 65], axis: ["20K", "20K"],
      male: [1, 4, 17, 41, 56, 73, 69, 49, 52, 56], female: [3, 7, 20, 44, 52, 76, 79, 48, 48, 52] },
    { name: "Tampines", width: 199, zero: 98, grid: [-65, 65], axis: ["20K", "20K"],
      male: [1, 7, 31, 66, 59, 55, 69, 63, 41, 45], female: [3, 13, 31, 69, 69, 58, 72, 62, 38, 41] },
    { name: "Woodla..", width: 199, zero: 98, grid: [-65, 65], axis: ["20K", "20K"],
      male: [1, 7, 21, 52, 69, 59, 59, 73, 48, 41], female: [3, 7, 20, 48, 68, 62, 58, 65, 44, 38] },
    { name: "Yishun", width: 197, zero: 98, grid: [-64, -33, 33, 67], axis: ["20K", "0K"],
      male: [1, 7, 21, 48, 52, 52, 58, 48, 38, 38], female: [3, 10, 24, 48, 52, 52, 62, 44, 34, 34] }
];

// Small helper for creating elements
function el(className, text) {
    const node = document.createElement("div");
    node.className = className;
    if (text) node.textContent = text;
    return node;
}

function buildChart() {
    const chart = document.querySelector("#chart");

    // Header row
    const head = el("chart-row");
    const corner = el("corner", "AG (10..");
    const sort = el("sort-za");
    sort.append(el("", "Z"), el("", "A"));
    corner.append(sort);
    head.append(corner);
    panes.forEach((p, i) => {
        const cell = el("head-cell" + (i === panes.length - 1 ? " last-cell" : ""), p.name);
        cell.style.width = p.width + "px";
        head.append(cell);
    });

    // Plot row
    const plot = el("chart-row");
    const labels = el("age-labels");
    ageGroups.forEach(a => labels.append(el("age-label", a)));
    plot.append(labels);
    panes.forEach((p, i) => {
        const pane = el("pane" + (i === panes.length - 1 ? " last-cell" : ""));
        pane.style.width = p.width + "px";
        p.grid.forEach(g => {
            const line = el("grid-line");
            line.style.left = (p.zero + g - 3) + "px";
            pane.append(line);
        });
        ageGroups.forEach((a, r) => {
            const row = el("bar-row");
            const left = el("side-l");
            left.style.width = (p.zero - 3) + "px";
            const male = el("bar male");
            male.style.width = p.male[r] + "px";
            left.append(male);
            const female = el("bar female");
            female.style.width = p.female[r] + "px";
            row.append(left, female);
            pane.append(row);
        });
        const zero = el("zero");
        zero.style.left = (p.zero - 4) + "px";
        pane.append(zero);
        plot.append(pane);
    });

    // Axis row
    const axis = el("chart-row");
    axis.append(el("axis-left"));
    panes.forEach((p, i) => {
        const cell = el("axis-cell" + (i === panes.length - 1 ? " last-cell" : ""));
        cell.style.width = p.width + "px";
        const left = el("ax-l", p.axis[0]);
        left.style.width = (p.zero - 3) + "px";
        left.style.paddingRight = (p.axis[0] === "0K" ? 8 : 19) + "px";
        const right = el("ax-r", p.axis[1]);
        right.style.paddingLeft = (p.axis[1] === "0K" ? 9 : 19) + "px";
        const zero = el("zero");
        zero.style.left = (p.zero - 4) + "px";
        cell.append(left, right, zero);
        p.grid.forEach(g => {
            const tick = el("tick");
            tick.style.left = (p.zero + g - 3) + "px";
            cell.append(tick);
        });
        axis.append(cell);
    });

    chart.append(head, plot, axis);
}

buildChart();
```
